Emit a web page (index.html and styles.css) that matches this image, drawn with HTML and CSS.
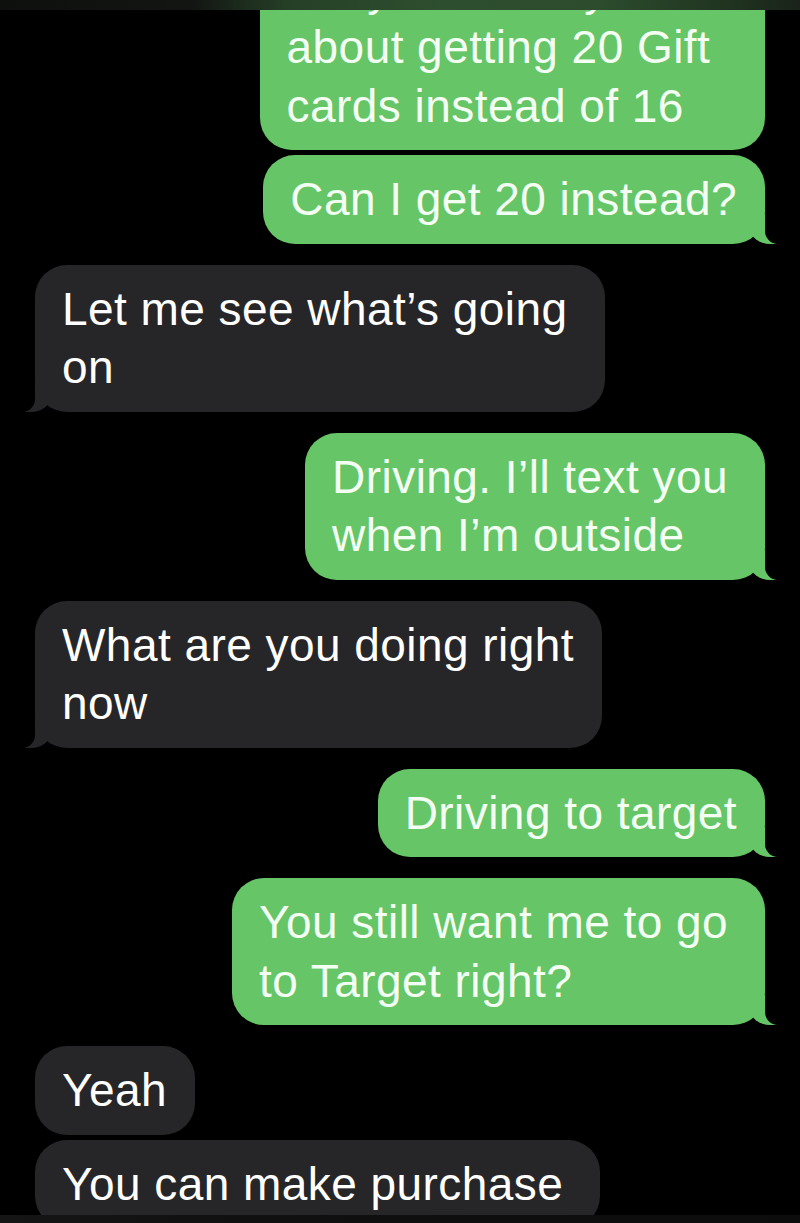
FILE: index.html
```html
<!DOCTYPE html>
<html lang="en">
<head>
<meta charset="utf-8">
<title>Messages</title>
<link rel="stylesheet" href="styles.css">
</head>
<body>
<div class="screen">
  <div class="topbar"></div>
  <div class="thread">
    <div class="msg sent wrapped">They said sorry twice<br>about getting 20 Gift<br>cards instead of 16</div>
    <div class="msg sent tail cont">Can I get 20 instead?</div>
    <div class="msg recv tail wrapped">Let me see what’s going<br>on</div>
    <div class="msg sent tail wrapped">Driving. I’ll text you<br>when I’m outside</div>
    <div class="msg recv tail">What are you doing right<br>now</div>
    <div class="msg sent tail">Driving to target</div>
    <div class="msg sent tail wrapped">You still want me to go<br>to Target right?</div>
    <div class="msg recv">Yeah</div>
    <div class="msg recv cont wrapped">You can make purchase</div>
  </div>
  <div class="bottombar"></div>
</div>
</body>
</html>
```
FILE: styles.css
```css
html, body {
  margin: 0;
  padding: 0;
  background: #000;
}

.screen {
  position: relative;
  width: 800px;
  height: 1223px;
  overflow: hidden;
  background: #000;
  font-family: "Liberation Sans", Arial, sans-serif;
}

.topbar {
  position: absolute;
  top: 0;
  left: 0;
  right: 0;
  height: 10px;
  z-index: 5;
  background: linear-gradient(to right, #0e100e 0%, #121512 24%, #253f26 36%, #2e4f2f 55%, #2c4c2d 75%, #1f321f 92%, #1a231a 100%);
}

.bottombar {
  position: absolute;
  left: 0;
  right: 0;
  bottom: 0;
  height: 8px;
  z-index: 5;
  background: linear-gradient(to right, #151515 0%, #101010 30%, #0c0c0c 100%);
}

.thread {
  display: flex;
  flex-direction: column;
  padding: 0 35px;
  margin-top: -55.5px;
}

.msg {
  position: relative;
  white-space: nowrap;
  font-size: 46px;
  letter-spacing: 0.45px;
  line-height: 58.5px;
  padding: 15px 28px 15px 27px;
  border-radius: 32px;
  margin-top: 21px;
}

.msg.wrapped {
  padding-right: 37px;
}

.msg:first-child {
  margin-top: 0;
}

.msg.cont {
  margin-top: 5px;
}

.sent {
  align-self: flex-end;
  background: #66c566;
  color: #f4fff4;
}

.recv {
  align-self: flex-start;
  background: #262628;
  color: #ffffff;
}

.tail::before,
.tail::after {
  content: "";
  position: absolute;
  bottom: 0;
  height: 30px;
}

.sent.tail::before {
  right: -11px;
  width: 26px;
  background: #66c566;
  border-bottom-left-radius: 20px 16px;
}

.sent.tail::after {
  right: -36px;
  width: 36px;
  background: #000;
  border-bottom-left-radius: 13px;
}

.recv.tail::before {
  left: -10px;
  width: 26px;
  background: #262628;
  border-bottom-right-radius: 20px 16px;
}

.recv.tail::after {
  left: -36px;
  width: 36px;
  background: #000;
  border-bottom-right-radius: 13px;
}
```
